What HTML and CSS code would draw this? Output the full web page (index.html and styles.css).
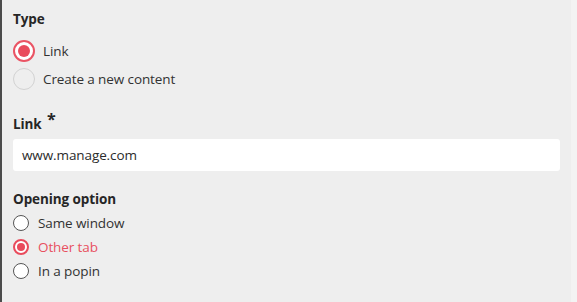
FILE: index.html
```html
<!DOCTYPE html>
<html lang="en">
<head>
<meta charset="utf-8">
<title>Link settings</title>
<link rel="stylesheet" href="styles.css">
</head>
<body>
<div class="page">
  <main class="panel">
    <div class="field-title">Type</div>
    <div class="big-group">
      <label class="big-option selected"><span class="big-radio"></span><span>Link</span></label>
      <label class="big-option"><span class="big-radio"></span><span>Create a new content</span></label>
    </div>

    <div class="field-title link-title">Link <span class="req">*</span></div>
    <div class="input">www.manage.com</div>

    <div class="field-title open-title">Opening option</div>
    <div class="small-group">
      <label class="small-option"><span class="small-radio"></span><span>Same window</span></label>
      <label class="small-option selected"><span class="small-radio"></span><span>Other tab</span></label>
      <label class="small-option"><span class="small-radio"></span><span>In a popin</span></label>
    </div>
  </main>
  <div class="side"></div>
</div>
</body>
</html>
```

FILE: styles.css
```css
html, body {
  margin: 0;
  padding: 0;
}
body {
  background: #eeeeee;
  font-family: "Open Sans", "Noto Sans", sans-serif;
  font-size: 13.5px;
  letter-spacing: -0.1px;
  color: #323232;
}
.page {
  display: flex;
  height: 302px;
}
.panel {
  flex: 0 0 571px;
  box-sizing: border-box;
  border-left: 2px solid #4b4b4b;
  padding: 10px 11px 0 11px;
  background: #eeeeee;
}
.side {
  flex: 1;
  background: #f3f3f3;
}
.field-title {
  font-weight: 700;
  line-height: 18px;
  height: 18px;
  color: #262626;
}
.req {
  font-size: 16px;
  position: relative;
  top: -4px;
  margin-left: 2px;
}
.big-group {
  display: flex;
  flex-direction: column;
  gap: 6px;
  margin-top: 12px;
}
.big-option {
  display: flex;
  align-items: center;
  gap: 8px;
  height: 22px;
}
.big-radio {
  width: 22px;
  height: 22px;
  box-sizing: border-box;
  border-radius: 50%;
  border: 1px solid #d2d2d2;
  display: flex;
  align-items: center;
  justify-content: center;
}
.big-option.selected .big-radio {
  border: 2px solid #ea5464;
  background: #ffffff;
}
.big-option.selected .big-radio::after {
  content: "";
  width: 12px;
  height: 12px;
  border-radius: 50%;
  background: #e94b5c;
}
.link-title {
  margin-top: 24px;
}
.input {
  margin-top: 7px;
  height: 32px;
  width: 547px;
  box-sizing: border-box;
  background: #ffffff;
  border-radius: 3px;
  padding-left: 9px;
  display: flex;
  align-items: center;
  color: #2b2b2b;
}
.open-title {
  margin-top: 19px;
}
.small-group {
  display: flex;
  flex-direction: column;
  margin-top: 3px;
}
.small-option {
  display: flex;
  align-items: center;
  gap: 9px;
  height: 24px;
}
.small-radio {
  width: 16px;
  height: 16px;
  box-sizing: border-box;
  border-radius: 50%;
  border: 1.5px solid #555555;
  background: #ffffff;
  display: flex;
  align-items: center;
  justify-content: center;
}
.small-option.selected {
  color: #e8505f;
}
.small-option.selected .small-radio {
  border: 2px solid #e94b5c;
}
.small-option.selected .small-radio::after {
  content: "";
  width: 8px;
  height: 8px;
  border-radius: 50%;
  background: #e94b5c;
}
```
